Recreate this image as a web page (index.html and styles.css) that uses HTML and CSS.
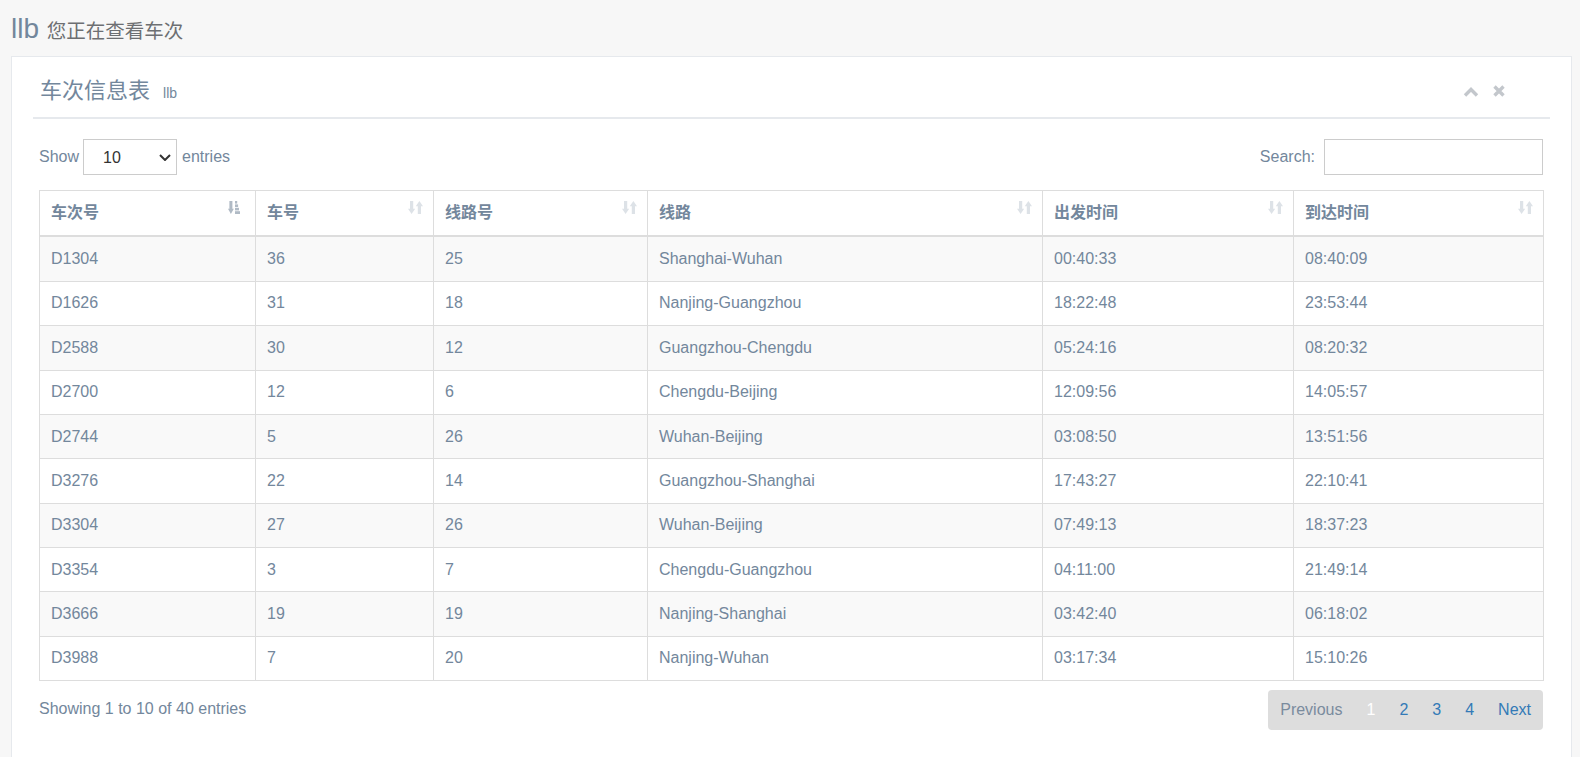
FILE: index.html
```html
<!DOCTYPE html>
<html lang="zh">
<head>
<meta charset="utf-8">
<title>车次</title>
<link rel="stylesheet" href="styles.css">
</head>
<body>
<div class="page">
  <div class="page-title">
    <h3>llb <small>您正在查看车次</small></h3>
  </div>
  <div class="panel">
    <div class="x-title">
      <h2>车次信息表<small>llb</small></h2>
      <ul class="toolbox">
        <li><svg width="16" height="11" viewBox="0 0 16 11"><polyline points="2,9.5 8,3.5 14,9.5" fill="none" stroke="#c3c7cc" stroke-width="3.4"/></svg></li>
        <li><svg width="12" height="12" viewBox="0 0 12 12"><path d="M1.5 1.5 L10.5 10.5 M10.5 1.5 L1.5 10.5" fill="none" stroke="#c3c7cc" stroke-width="3.4"/></svg></li>
      </ul>
    </div>
    <div class="x-content">
      <div class="dt-top">
        <label class="dt-length">Show
          <span class="select-wrap">
            <select class="dt-select"><option>10</option><option>25</option><option>50</option><option>100</option></select>
            <svg class="caret" width="12" height="7" viewBox="0 0 12 7"><polyline points="1,1 6,6 11,1" fill="none" stroke="#333" stroke-width="2"/></svg>
          </span>
          entries</label>
        <label class="dt-filter">Search:<input type="search" class="dt-search"></label>
      </div>
      <table class="dt-table">
        <colgroup>
          <col class="c1"><col class="c2"><col class="c3"><col class="c4"><col class="c5"><col class="c6">
        </colgroup>
        <thead>
          <tr>
            <th>车次号<svg class="sort sort-asc" width="12" height="13" viewBox="0 0 12 13"><rect x="1.4" y="0" width="3" height="8.4" fill="#b0bac5"/><polygon points="0,7.8 5.8,7.8 2.9,13" fill="#b0bac5"/><rect x="7" y="0" width="2.2" height="2.6" fill="#b0bac5"/><rect x="7" y="3.4" width="3.1" height="2.6" fill="#b0bac5"/><rect x="7" y="6.8" width="4" height="2.6" fill="#b0bac5"/><rect x="7" y="10.2" width="5" height="2.8" fill="#b0bac5"/></svg></th>
            <th>车号<svg class="sort sort-both" width="15" height="13" viewBox="0 0 15 13"><rect x="2" y="0" width="3.2" height="8.2" fill="#dde2e7"/><polygon points="0,7.8 7.2,7.8 3.6,13" fill="#dde2e7"/><rect x="9.8" y="4.8" width="3.2" height="8.2" fill="#dde2e7"/><polygon points="7.8,5.2 15,5.2 11.4,0" fill="#dde2e7"/></svg></th>
            <th>线路号<svg class="sort sort-both" width="15" height="13" viewBox="0 0 15 13"><rect x="2" y="0" width="3.2" height="8.2" fill="#dde2e7"/><polygon points="0,7.8 7.2,7.8 3.6,13" fill="#dde2e7"/><rect x="9.8" y="4.8" width="3.2" height="8.2" fill="#dde2e7"/><polygon points="7.8,5.2 15,5.2 11.4,0" fill="#dde2e7"/></svg></th>
            <th>线路<svg class="sort sort-both" width="15" height="13" viewBox="0 0 15 13"><rect x="2" y="0" width="3.2" height="8.2" fill="#dde2e7"/><polygon points="0,7.8 7.2,7.8 3.6,13" fill="#dde2e7"/><rect x="9.8" y="4.8" width="3.2" height="8.2" fill="#dde2e7"/><polygon points="7.8,5.2 15,5.2 11.4,0" fill="#dde2e7"/></svg></th>
            <th>出发时间<svg class="sort sort-both" width="15" height="13" viewBox="0 0 15 13"><rect x="2" y="0" width="3.2" height="8.2" fill="#dde2e7"/><polygon points="0,7.8 7.2,7.8 3.6,13" fill="#dde2e7"/><rect x="9.8" y="4.8" width="3.2" height="8.2" fill="#dde2e7"/><polygon points="7.8,5.2 15,5.2 11.4,0" fill="#dde2e7"/></svg></th>
            <th>到达时间<svg class="sort sort-both" width="15" height="13" viewBox="0 0 15 13"><rect x="2" y="0" width="3.2" height="8.2" fill="#dde2e7"/><polygon points="0,7.8 7.2,7.8 3.6,13" fill="#dde2e7"/><rect x="9.8" y="4.8" width="3.2" height="8.2" fill="#dde2e7"/><polygon points="7.8,5.2 15,5.2 11.4,0" fill="#dde2e7"/></svg></th>
          </tr>
        </thead>
        <tbody>
          <tr><td>D1304</td><td>36</td><td>25</td><td>Shanghai-Wuhan</td><td>00:40:33</td><td>08:40:09</td></tr>
          <tr><td>D1626</td><td>31</td><td>18</td><td>Nanjing-Guangzhou</td><td>18:22:48</td><td>23:53:44</td></tr>
          <tr><td>D2588</td><td>30</td><td>12</td><td>Guangzhou-Chengdu</td><td>05:24:16</td><td>08:20:32</td></tr>
          <tr><td>D2700</td><td>12</td><td>6</td><td>Chengdu-Beijing</td><td>12:09:56</td><td>14:05:57</td></tr>
          <tr><td>D2744</td><td>5</td><td>26</td><td>Wuhan-Beijing</td><td>03:08:50</td><td>13:51:56</td></tr>
          <tr><td>D3276</td><td>22</td><td>14</td><td>Guangzhou-Shanghai</td><td>17:43:27</td><td>22:10:41</td></tr>
          <tr><td>D3304</td><td>27</td><td>26</td><td>Wuhan-Beijing</td><td>07:49:13</td><td>18:37:23</td></tr>
          <tr><td>D3354</td><td>3</td><td>7</td><td>Chengdu-Guangzhou</td><td>04:11:00</td><td>21:49:14</td></tr>
          <tr><td>D3666</td><td>19</td><td>19</td><td>Nanjing-Shanghai</td><td>03:42:40</td><td>06:18:02</td></tr>
          <tr><td>D3988</td><td>7</td><td>20</td><td>Nanjing-Wuhan</td><td>03:17:34</td><td>15:10:26</td></tr>
        </tbody>
      </table>
      <div class="dt-bottom">
        <div class="dt-info">Showing 1 to 10 of 40 entries</div>
        <ul class="pagination">
          <li class="disabled"><a>Previous</a></li>
          <li class="active"><a>1</a></li>
          <li><a>2</a></li>
          <li><a>3</a></li>
          <li><a>4</a></li>
          <li><a>Next</a></li>
        </ul>
      </div>
    </div>
  </div>
</div>
</body>
</html>
```

FILE: styles.css
```css
html, body {
  margin: 0;
  padding: 0;
  height: 100%;
  overflow: hidden;
}

body {
  background: #f7f7f7;
  color: #73879c;
  font-family: "Liberation Sans", Arial, "Noto Sans CJK SC", sans-serif;
  font-size: 16px;
}

.page {
  padding: 0 8px 0 11px;
}

.page-title {
  padding-top: 13px;
  margin-bottom: 12px;
}

.page-title h3 {
  margin: 0;
  height: 31px;
  font-size: 28px;
  line-height: 31px;
  font-weight: 400;
  color: #73879c;
}

.page-title h3 small {
  font-size: 19.5px;
  color: #6d6f72;
}

.panel {
  background: #fff;
  border: 1px solid #e6e9ed;
  padding: 0 21px 40px;
  min-height: 760px;
}

.x-title {
  display: flex;
  align-items: center;
  padding: 19px 45px 11px 7px;
  border-bottom: 2px solid #e6e9ed;
}

.x-title h2 {
  margin: 0;
  height: 30px;
  font-size: 22px;
  line-height: 30px;
  font-weight: 400;
  color: #73879c;
}

.x-title h2 small {
  font-size: 14px;
  margin-left: 13px;
  color: #73879c;
}

.toolbox {
  list-style: none;
  margin: 0 0 0 auto;
  padding: 0;
  display: flex;
  align-items: center;
  gap: 14px;
}

.toolbox li {
  display: flex;
}

.x-content {
  padding: 20px 7px 0 6px;
}

.dt-top {
  display: flex;
  justify-content: space-between;
  align-items: center;
  height: 36px;
}

.dt-length, .dt-filter {
  display: flex;
  align-items: center;
  line-height: 22px;
}

.select-wrap {
  position: relative;
  display: inline-flex;
  margin: 0 5px 0 4px;
}

.dt-select {
  appearance: none;
  -webkit-appearance: none;
  width: 94px;
  height: 36px;
  border: 1px solid #cccccc;
  border-radius: 0;
  background: #fff;
  padding: 0 0 0 19px;
  font-family: "Liberation Sans", Arial, sans-serif;
  font-size: 16px;
  color: #333;
  margin: 0;
}

.caret {
  position: absolute;
  left: 76px;
  top: 15px;
  pointer-events: none;
}

.dt-search {
  width: 219px;
  height: 36px;
  box-sizing: border-box;
  border: 1px solid #cccccc;
  margin: 0 0 0 9px;
  padding: 0 8px;
  font-size: 16px;
  background: #fff;
}

.dt-table {
  width: 100%;
  table-layout: fixed;
  border-collapse: collapse;
  margin-top: 15px;
  border: 1px solid #dddddd;
}

.c1 { width: 216px; }
.c2 { width: 178px; }
.c3 { width: 214px; }
.c4 { width: 395px; }
.c5 { width: 251px; }
.c6 { width: 250px; }

.dt-table th,
.dt-table td {
  padding: 10.7px 11px;
  line-height: 22px;
  height: 22px;
  text-align: left;
  border: 1px solid #dddddd;
  white-space: nowrap;
}

.dt-table th {
  position: relative;
  padding-top: 11.2px;
  padding-bottom: 11.2px;
  font-weight: 700;
  border-bottom: 2px solid #dddddd;
}

.dt-table tbody tr:nth-child(odd) td {
  background: #f9f9f9;
}

.sort {
  position: absolute;
  top: 10px;
}

.sort-asc {
  right: 15px;
}

.sort-both {
  right: 10px;
}

.dt-bottom {
  display: flex;
  justify-content: space-between;
  align-items: flex-start;
  margin-top: 9px;
}

.dt-info {
  padding-top: 8px;
  line-height: 22px;
}

.pagination {
  list-style: none;
  margin: 0;
  padding: 0;
  display: flex;
  background: #dddddd;
  border-radius: 4px;
}

.pagination li a {
  display: block;
  padding: 9px 12px;
  line-height: 22px;
  color: #337ab7;
}

.pagination li.disabled a {
  color: #7a8b9d;
}

.pagination li.active a {
  color: #ffffff;
}
```
